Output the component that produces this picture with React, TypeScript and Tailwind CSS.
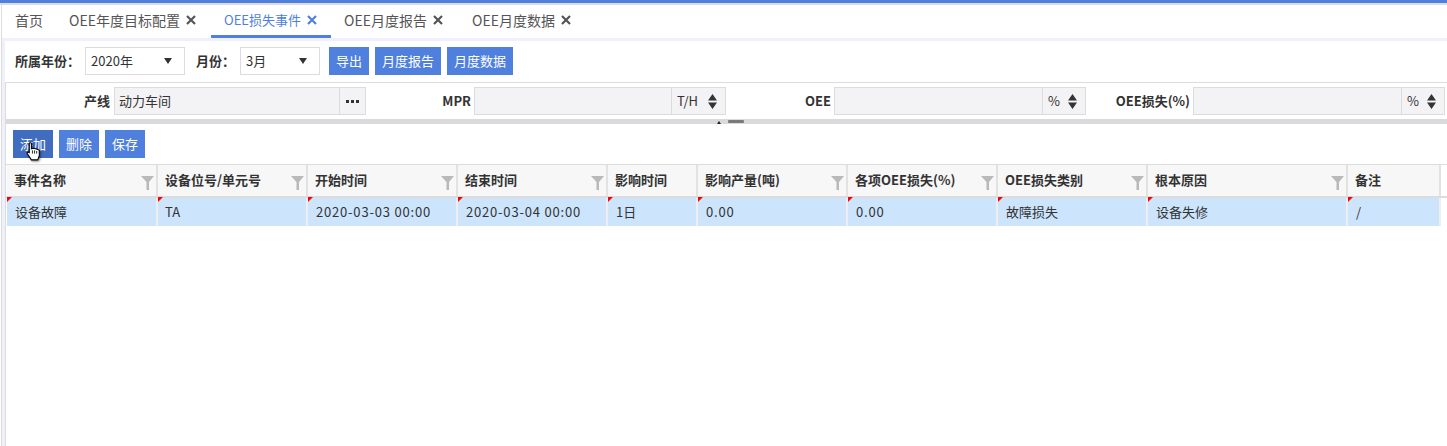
import React from 'react';

const font = "font-['Noto_Sans_CJK_SC','Noto_Sans',sans-serif]";

const tabs = [
  { label: '首页', w: 'w-[55px]', pad: 'pl-[13px]', closable: false },
  { label: 'OEE年度目标配置', w: 'w-[154px]', pad: 'pl-[12px]', closable: true },
  { label: 'OEE损失事件', w: 'w-[120px]', pad: 'pl-[13px]', closable: true, active: true },
  { label: 'OEE月度报告', w: 'w-[128px]', pad: 'pl-[13px]', closable: true },
  { label: 'OEE月度数据', w: 'w-[128px]', pad: 'pl-[13px]', closable: true },
];

const columns = [
  { title: '事件名称', value: '设备故障', w: 'w-[151px]', filter: true },
  { title: '设备位号/单元号', value: 'TA', w: 'w-[150px]', filter: true, cellPad: 'pl-[7px]' },
  { title: '开始时间', value: '2020-03-03 00:00', w: 'w-[150px]', filter: true, track: 'tracking-[0.8px]' },
  { title: '结束时间', value: '2020-03-04 00:00', w: 'w-[150px]', filter: true, track: 'tracking-[0.8px]' },
  { title: '影响时间', value: '1日', w: 'w-[90px]', filter: false },
  { title: '影响产量(吨)', value: '0.00', w: 'w-[150px]', filter: true, track: 'tracking-[0.8px]' },
  { title: '各项OEE损失(%)', value: '0.00', w: 'w-[150px]', filter: true, track: 'tracking-[0.8px]' },
  { title: 'OEE损失类别', value: '故障损失', w: 'w-[150px]', filter: true },
  { title: '根本原因', value: '设备失修', w: 'w-[200px]', filter: true },
  { title: '备注', value: '/', w: 'w-[93px]', filter: false },
];

const CloseIcon = ({ color }: { color: string }) => (
  <svg width="10" height="10" viewBox="0 0 10 10" className="ml-[6px] shrink-0">
    <path d="M1 1 L9 9 M9 1 L1 9" stroke={color} strokeWidth="2.2" />
  </svg>
);

const FilterIcon = () => (
  <svg width="13" height="14" viewBox="0 0 13 14" className="shrink-0">
    <path d="M0 0 H13 L8 6 V14 H5.5 V6 Z" fill="#b9b9b9" />
  </svg>
);

const Spinner = () => (
  <svg width="9" height="15" viewBox="0 0 9 15" className="shrink-0">
    <path d="M4.5 0 L9 6.5 H0 Z M0 8.5 H9 L4.5 15 Z" fill="#333" />
  </svg>
);

const Select = ({ value, w }: { value: string; w: string }) => (
  <div className={`${w} h-[28px] border border-[#dcdcdc] bg-white flex items-center justify-between pl-[5px] pr-[12px] text-[13px] text-[#333]`}>
    <span>{value}</span>
    <svg width="8" height="6" viewBox="0 0 8 6"><path d="M0 0 H8 L4 6 Z" fill="#333" /></svg>
  </div>
);

const Btn = ({ label, w, dark }: { label: string; w: string; dark?: boolean }) => (
  <button className={`${w} h-[28px] text-white text-[13px] ${dark ? 'bg-[#406dc0]' : 'bg-[#5080de]'}`}>{label}</button>
);

const Field = ({ label, labelW, unit, unitW }: { label: string; labelW: string; unit: string; unitW: string }) => (
  <div className="flex items-center">
    <span className={`${labelW} text-right pr-[3px] font-bold text-[13px] text-[#333] whitespace-nowrap`}>{label}</span>
    <div className="w-[252px] h-[28px] bg-[#f3f2f5] border border-[#dcdcdc] flex">
      <div className="flex-1" />
      <div className={`${unitW} border-l border-[#dcdcdc] flex items-center justify-between pl-[5px] pr-[8px] text-[13px] text-[#333]`}>
        <span>{unit}</span>
        <Spinner />
      </div>
    </div>
  </div>
);

export default function App() {
  return (
    <div className={`${font} w-[1447px] h-[446px] bg-white overflow-hidden`}>
      <div className="h-[3px] bg-[#5080de]" />
      <div className="h-[2px] bg-[#dcdcdc]" />
      <div className="ml-[1px] h-[441px] flex flex-col border-l border-[#dcdcdc]">
        <div className="h-[33px] flex shrink-0">
          {tabs.map((t) => (
            <div
              key={t.label}
              className={`${t.w} ${t.pad} h-[33px] flex items-center ${t.active ? 'text-[13px] text-[#5080de] border-b-[3px] border-[#5080de]' : 'text-[14px] text-[#555] pb-[3px]'}`}
            >
              <span>{t.label}</span>
              {t.closable && <CloseIcon color={t.active ? '#5080de' : '#555'} />}
            </div>
          ))}
        </div>
        <div className="h-[3px] bg-[#eff0fb] shrink-0" />
        <div className="flex-1 flex">
          <div className="w-[3px] bg-[#eff0fb]" />
          <div className="flex-1 flex flex-col min-w-0">
            <div className="h-[42px] shrink-0 flex items-center pl-[10px] pb-[1px] border-b border-[#dcdcdc]">
              <span className="font-bold text-[13px] text-[#333] mr-[5px]">所属年份：</span>
              <Select value="2020年" w="w-[100px]" />
              <span className="font-bold text-[13px] text-[#333] ml-[11px] mr-[5px]">月份：</span>
              <Select value="3月" w="w-[80px]" />
              <div className="flex gap-[6px] ml-[9px]">
                <Btn label="导出" w="w-[40px]" />
                <Btn label="月度报告" w="w-[66px]" />
                <Btn label="月度数据" w="w-[66px]" />
              </div>
            </div>
            <div className="flex-1 flex flex-col border-l border-[#dcdcdc]">
              <div className="h-[36px] flex items-center shrink-0">
                <span className="w-[108px] text-right pr-[4px] font-bold text-[13px] text-[#333]">产线</span>
                <div className="w-[252px] h-[28px] bg-[#f3f2f5] border border-[#dcdcdc] flex text-[13px] text-[#333]">
                  <span className="flex-1 pl-[4px] leading-[26px]">动力车间</span>
                  <div className="w-[26px] border-l border-[#dcdcdc] flex items-center justify-center gap-[2px]">
                    <span className="w-[3px] h-[3px] bg-[#333]" />
                    <span className="w-[3px] h-[3px] bg-[#333]" />
                    <span className="w-[3px] h-[3px] bg-[#333]" />
                  </div>
                </div>
                <Field label="MPR" labelW="w-[108px]" unit="T/H" unitW="w-[54px]" />
                <Field label="OEE" labelW="w-[108px]" unit="%" unitW="w-[43px]" />
                <Field label="OEE损失(%)" labelW="w-[107px]" unit="%" unitW="w-[43px]" />
              </div>
              <div className="h-[5px] bg-[#dbd9dc] flex justify-center items-start shrink-0 pl-[8px] gap-[7px]">
                <svg width="4" height="3" viewBox="0 0 4 3" className="mt-[2px]"><path d="M2 0 L4 3 H0 Z" fill="#222" /></svg>
                <div className="w-[16px] h-[3px] bg-[#7a7a7a] rounded-[1px] mt-[1px]" />
              </div>
              <div className="relative flex gap-[6px] h-[40px] shrink-0 items-start pl-[7px] pt-[6px]">
                <Btn label="添加" w="w-[40px]" dark />
                <Btn label="删除" w="w-[40px]" />
                <Btn label="保存" w="w-[40px]" />
                <svg width="15" height="20" viewBox="0 0 14 19" className="absolute left-[20px] top-[18px] drop-shadow-[1px_1px_1px_rgba(0,0,0,0.5)]">
                  <path
                    d="M3 1.5 C3 0.5 5 0.5 5 1.5 V6.5 L7 6 L9 6.5 L11 7 L12.5 8 V13 L11 17 H5 L1 11 C0.5 10 2 9.2 3 10 Z"
                    fill="#fff"
                    stroke="#000"
                    strokeWidth="1"
                  />
                  <path d="M6 8 V11 M8 8 V11 M10 8.5 V11" stroke="#000" strokeWidth="0.8" />
                </svg>
              </div>
              <div className="h-[34px] pl-[1px] flex shrink-0 border-t border-b-2 border-[#dcdcdc]">
                {columns.map((c) => (
                  <div key={c.title} className={`${c.w} bg-[#f7f7f7] flex items-center justify-between pl-[7px] pr-[2px] border-r-2 border-[#e2e2e2] font-bold text-[13px] text-[#333] whitespace-nowrap`}>
                    <span className="mb-[2px]">{c.title}</span>
                    {c.filter && <span className="mt-[5px]"><FilterIcon /></span>}
                  </div>
                ))}
              </div>
              <div className="flex h-[28px] pl-[1px] shrink-0 text-[13px] text-[#333]">
                {columns.map((c) => (
                  <div key={c.title} className={`${c.w} relative bg-[#cce5fd] border-r-2 border-[#eeeeee] ${c.cellPad ?? 'pl-[8px]'} leading-[28px] whitespace-nowrap ${c.track ?? ''}`}>
                    <span className="absolute left-0 top-[-1px] w-0 h-0 border-t-[5px] border-r-[5px] border-t-[#ff0000] border-r-transparent" />
                    {c.value}
                  </div>
                ))}
              </div>
            </div>
          </div>
        </div>
      </div>
    </div>
  );
}
